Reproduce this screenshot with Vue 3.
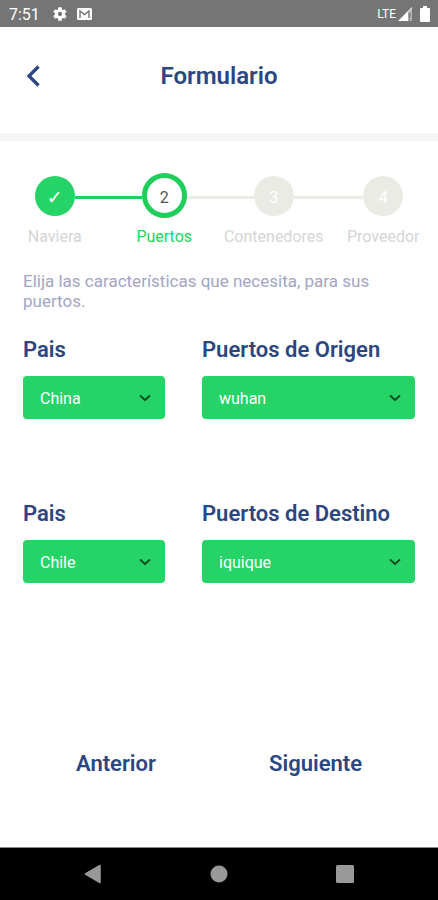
<script setup>
import { ref } from 'vue'

const steps = [
  { label: 'Naviera', mark: '✓', state: 'done' },
  { label: 'Puertos', mark: '2', state: 'active' },
  { label: 'Contenedores', mark: '3', state: 'pending' },
  { label: 'Proveedor', mark: '4', state: 'pending' },
]

const fields = ref([
  { id: 'pais-origen', label: 'Pais', value: 'China' },
  { id: 'puerto-origen', label: 'Puertos de Origen', value: 'wuhan' },
  { id: 'pais-destino', label: 'Pais', value: 'Chile' },
  { id: 'puerto-destino', label: 'Puertos de Destino', value: 'iquique' },
])

function lineBefore(i) {
  if (i === 0) return 'line-none'
  return steps[i - 1].state === 'done' ? 'line-done' : ''
}

function lineAfter(i) {
  if (i === steps.length - 1) return 'line-none'
  return steps[i].state === 'done' ? 'line-done' : ''
}
</script>

<template>
  <div class="screen">
    <div class="status">
      <span class="time">7:51</span>
      <svg class="gear" width="16" height="16" viewBox="0 0 24 24" aria-hidden="true">
        <path fill="#fff" fill-rule="evenodd" d="M19.4 13a7.500 7.500 0 0 0 0-2l2.100-1.600a.5.5 0 0 0 .1-.7l-2-3.400a.5.5 0 0 0-.6-.2l-2.500 1a7.300 7.300 0 0 0-1.700-1l-.4-2.700a.5.5 0 0 0-.5-.4h-4a.5.5 0 0 0-.5.4L9 5.100a7.700 7.700 0 0 0-1.700 1l-2.500-1a.5.5 0 0 0-.6.2l-2 3.400a.5.5 0 0 0 .1.7L4.500 11a8 8 0 0 0 0 2l-2.200 1.600a.5.5 0 0 0-.1.700l2 3.400c.1.200.4.300.6.200l2.500-1c.5.400 1.100.7 1.700 1l.4 2.700c0 .2.2.4.5.4h4c.3 0 .5-.2.500-.4l.4-2.700a7.300 7.300 0 0 0 1.700-1l2.500 1c.2.1.5 0 .6-.2l2-3.400a.5.5 0 0 0-.1-.7zM12 15.200a3.200 3.200 0 1 1 0-6.400 3.200 3.200 0 0 1 0 6.400z" />
      </svg>
      <svg class="mail" width="15" height="12" viewBox="0 0 15 12" aria-hidden="true">
        <rect width="15" height="12" rx="1.500" fill="#fff" />
        <path d="M3 10V3l4.500 3.500L12 3v7" fill="none" stroke="#757575" stroke-width="1.400" />
      </svg>
      <span class="lte">LTE</span>
      <svg class="signal" width="14" height="14" viewBox="0 0 14 14" aria-hidden="true">
        <path d="M0 14 14 0v14z" fill="#fff" />
        <path d="M10 5 14 1v13h-4z" fill="#b4b4b4" />
        <path d="M11.500 6v5M11.500 12v1.500" stroke="#757575" stroke-width="1.500" />
      </svg>
      <svg width="10" height="16" viewBox="0 0 10 16" aria-hidden="true">
        <path d="M3 0h4v2h2a1 1 0 0 1 1 1v12a1 1 0 0 1-1 1H1a1 1 0 0 1-1-1V3a1 1 0 0 1 1-1h2z" fill="#fff" />
      </svg>
    </div>

    <header class="header">
      <button class="back" type="button" aria-label="Volver">
        <svg width="14" height="22" viewBox="0 0 14 22" aria-hidden="true">
          <path d="M12.500 1.500 3 11l9.500 9.500" fill="none" stroke="#2b4680" stroke-width="3.400" />
        </svg>
      </button>
      <h1>Formulario</h1>
    </header>

    <main class="content">
      <ol class="steps">
        <li v-for="(step, i) in steps" :key="step.label" class="step" :class="step.state">
          <div class="track">
            <span class="line" :class="lineBefore(i)"></span>
            <span class="dot">{{ step.mark }}</span>
            <span class="line" :class="lineAfter(i)"></span>
          </div>
          <span class="caption">{{ step.label }}</span>
        </li>
      </ol>

      <p class="intro">Elija las características que necesita, para sus puertos.</p>

      <form class="fields">
        <div v-for="field in fields" :key="field.id" class="field">
          <label :for="field.id">{{ field.label }}</label>
          <div class="picker">
            <select :id="field.id" v-model="field.value">
              <option>{{ field.value }}</option>
            </select>
            <svg class="chevron" width="12" height="8" viewBox="0 0 12 8" aria-hidden="true">
              <path d="M1 1.500 6 6l5-4.500" fill="none" stroke="#12491f" stroke-width="1.800" />
            </svg>
          </div>
        </div>
      </form>

      <div class="actions">
        <button type="button">Anterior</button>
        <button type="button">Siguiente</button>
      </div>
    </main>

    <nav class="navbar">
      <button type="button" aria-label="Atrás">
        <svg width="18" height="20" viewBox="0 0 18 20"><path d="M16 1.500v17L1.500 10z" fill="#999" stroke="#999" stroke-width="1.500" stroke-linejoin="round" /></svg>
      </button>
      <button type="button" aria-label="Inicio">
        <svg width="18" height="18" viewBox="0 0 18 18"><circle cx="9" cy="9" r="8.500" fill="#999" /></svg>
      </button>
      <button type="button" aria-label="Recientes">
        <svg width="18" height="18" viewBox="0 0 18 18"><rect width="18" height="18" rx="1.500" fill="#999" /></svg>
      </button>
    </nav>
  </div>
</template>

<style>
body {
  margin: 0;
}
</style>

<style scoped>
.screen {
  display: flex;
  flex-direction: column;
  min-height: 100vh;
  background: #fff;
  color: #2b4680;
  font-family: Roboto, "Liberation Sans", sans-serif;
}

button {
  padding: 0;
  border: 0;
  background: none;
  color: inherit;
  font-family: inherit;
}

svg {
  display: block;
}

.status {
  display: flex;
  align-items: center;
  box-sizing: border-box;
  height: 27px;
  padding: 1px 8px 0 9px;
  background: #757575;
  color: #fff;
}

.time {
  font-size: 16px;
}

.gear {
  margin-left: 12px;
}

.mail {
  margin-left: 9px;
}

.lte {
  margin-left: auto;
  font-size: 12px;
}

.signal {
  margin: 0 8px 0 2px;
}

.header {
  display: grid;
  grid-template-columns: 1fr auto 1fr;
  align-items: center;
  box-sizing: border-box;
  height: 114px;
  padding: 0 26px 8px;
  border-bottom: 8px solid #f4f5f7;
}

.back {
  justify-self: start;
}

h1 {
  margin: 0;
  font-size: 24px;
  font-weight: 600;
  line-height: 28px;
}

.content {
  display: flex;
  flex: 1;
  flex-direction: column;
}

.steps {
  display: grid;
  grid-template-columns: repeat(4, 1fr);
  margin: 0;
  padding: 32px 0 0;
  list-style: none;
}

.step {
  color: #d5d5d5;
  text-align: center;
}

.track {
  display: flex;
  align-items: center;
  height: 45px;
}

.line {
  flex: 1;
  height: 3px;
  margin-top: 3px;
  background: #ebebe6;
}

.line-done {
  background: #1fce5b;
}

.line-none {
  background: none;
}

.dot {
  box-sizing: border-box;
  width: 40px;
  height: 40px;
  padding-top: 2px;
  border-radius: 50%;
  background: #ebebe6;
  color: #fff;
  font-size: 16px;
  line-height: 40px;
}

.done .dot {
  background: #25d366;
  font-family: Roboto, "DejaVu Sans", sans-serif;
  font-size: 19px;
}

.active .dot {
  width: 45px;
  height: 45px;
  border: 5px solid #1fce5b;
  background: #fff;
  color: #555;
  line-height: 36px;
}

.caption {
  display: block;
  margin-top: 9px;
  font-size: 16px;
  line-height: 20px;
}

.active .caption {
  color: #25d366;
}

.intro {
  margin: 24px 23px 0;
  color: #a3a5c4;
  font-size: 17px;
  line-height: 20px;
}

.fields {
  display: grid;
  grid-template-columns: 2fr 3fr;
  gap: 81px 37px;
  padding: 25px 23px 0;
}

.field label {
  display: block;
  margin-bottom: 12px;
  font-size: 22px;
  font-weight: 600;
  line-height: 28px;
}

.picker {
  display: grid;
  align-items: center;
}

.picker > * {
  grid-area: 1 / 1;
}

select {
  width: 100%;
  height: 43px;
  padding: 2px 36px 0 17px;
  border: 0;
  border-radius: 4px;
  background: #25d366;
  color: #fff;
  font-family: inherit;
  font-size: 16px;
  appearance: none;
}

.chevron {
  justify-self: end;
  margin-right: 14px;
  pointer-events: none;
}

.actions {
  display: flex;
  justify-content: space-between;
  margin-top: auto;
  padding: 24px 76px 69px;
}

.actions button {
  font-size: 22px;
  font-weight: 600;
  line-height: 28px;
}

.navbar {
  display: flex;
  align-items: center;
  justify-content: space-between;
  box-sizing: border-box;
  height: 53px;
  padding: 0 84px;
  border-top: 1px solid #888;
  background: #000;
}
</style>
